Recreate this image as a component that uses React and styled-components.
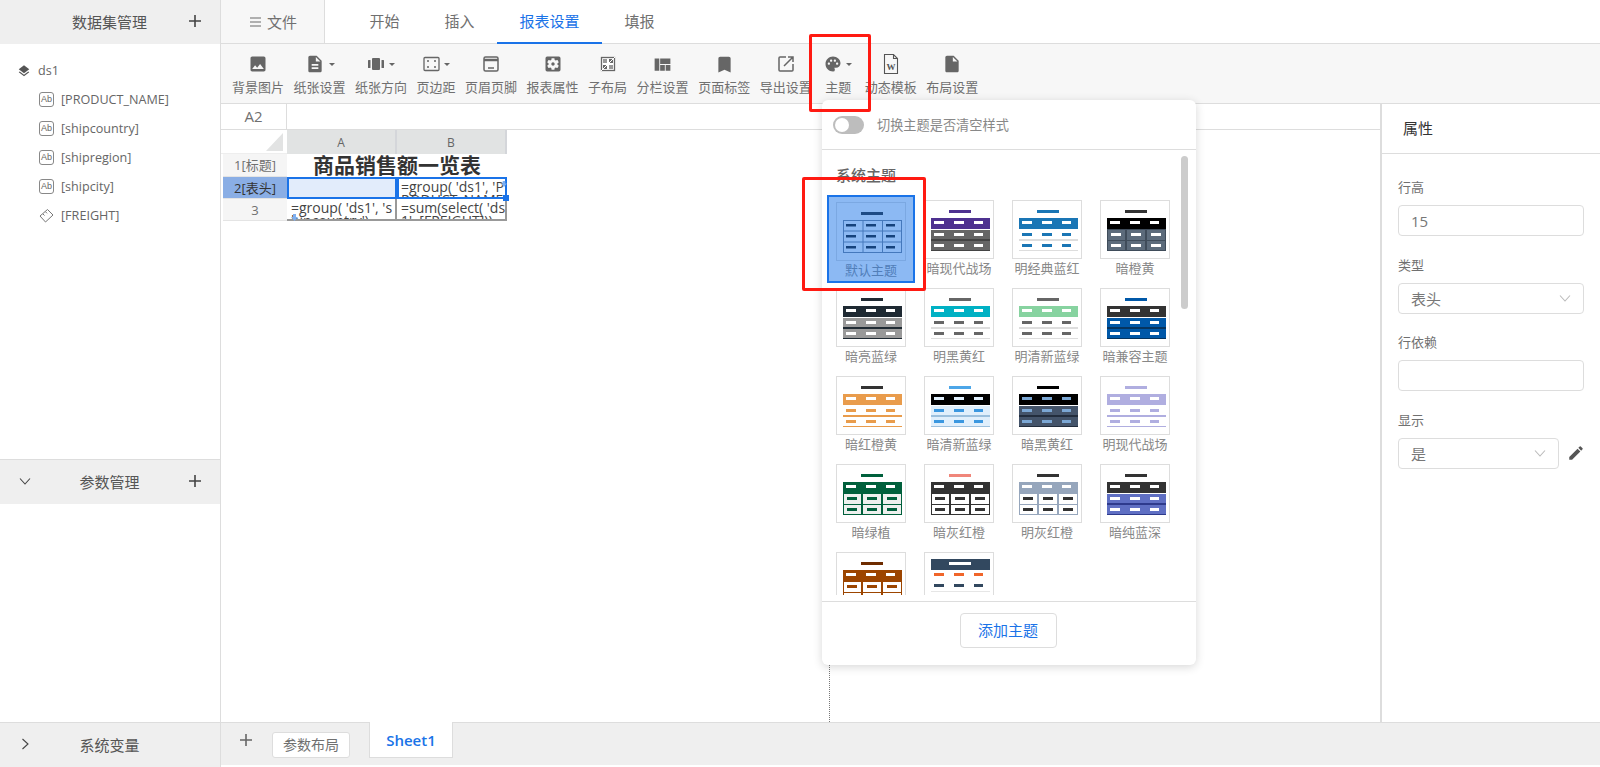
import React from "react";
import styled, { createGlobalStyle } from "styled-components";
import { MdPhoto, MdDescription, MdSettingsApplications, MdViewQuilt, MdBookmark, MdPalette, MdInsertDriveFile, MdEdit, MdLayers } from "react-icons/md";

const FONT = `"Open Sans", "Noto Sans CJK SC", sans-serif`;

const Global = createGlobalStyle`
  html, body { margin: 0; padding: 0; height: 100%; background: #fff; overflow: hidden; }
  * { box-sizing: border-box; }
  body { font-family: ${FONT}; color: #666; }
`;

const Page = styled.div`
  position: relative;
  width: 1600px;
  height: 767px;
  display: grid;
  grid-template-columns: 221px 1fr;
  overflow: hidden;
`;

/* ---------- Sidebar ---------- */
const Sidebar = styled.aside`
  display: flex;
  flex-direction: column;
  border-right: 1px solid #ddd;
  height: 767px;
`;
const PanelBar = styled.div`
  height: ${p => p.$h || 45}px;
  flex: none;
  background: #efefef;
  border-top: ${p => (p.$noBorder ? "none" : "1px solid #ddd")};
  display: grid;
  grid-template-columns: 49px 1fr 50px;
  align-items: center;
  padding-bottom: 2px;
  font-size: 15px;
  color: #555;
  text-align: center;
`;
const BarIcon = styled.span`
  display: flex;
  justify-content: center;
  color: #444;
`;
const Tree = styled.div`
  height: 415px;
  flex: none;
  padding-top: 12px;
`;
const Spacer = styled.div`
  flex: 1;
`;
const TreeRow = styled.div`
  height: 29px;
  display: flex;
  align-items: center;
  gap: 7px;
  padding-left: ${p => (p.$root ? 17 : 39)}px;
  font-size: 12.6px;
  color: #666;
  svg { flex: none; }
`;
const AbIcon = styled.span`
  width: 15px;
  height: 15px;
  border: 1px solid #888;
  border-radius: 3px;
  font-size: 9px;
  line-height: 13px;
  text-align: center;
  color: #666;
  font-family: "Liberation Sans", sans-serif;
  flex: none;
`;

/* ---------- Main ---------- */
const Main = styled.main`
  display: flex;
  flex-direction: column;
  height: 767px;
  min-width: 0;
`;
const TopBar = styled.div`
  height: 44px;
  flex: none;
  display: flex;
  border-bottom: 1px solid #ddd;
`;
const FileTab = styled.div`
  width: 104px;
  height: 43px;
  display: flex;
  align-items: center;
  gap: 6px;
  padding-left: 29px;
  background: #f7f7f7;
  border-right: 1px solid #ddd;
  font-size: 15px;
  color: #707070;
`;
const Tabs = styled.div`
  display: flex;
  padding-left: 22px;
`;
const Tab = styled.div`
  height: 44px;
  padding: 0 22.5px;
  line-height: 43px;
  font-size: 15px;
  color: ${p => (p.$active ? "#1a73e8" : "#707070")};
  border-bottom: 2px solid ${p => (p.$active ? "#1a73e8" : "transparent")};
`;
const Toolbar = styled.div`
  height: 60px;
  flex: none;
  display: flex;
  gap: 9.5px;
  padding: 8px 0 0 11px;
  background: #f7f7f7;
  border-bottom: 1px solid #ddd;
`;
const Tool = styled.div`
  min-width: 34px;
  display: flex;
  flex-direction: column;
  align-items: center;
  font-size: 13px;
  line-height: 20px;
  color: #707070;
  white-space: nowrap;
`;
const ToolIcon = styled.div`
  height: 24px;
  margin-bottom: 1px;
  display: flex;
  align-items: center;
  gap: 4px;
  color: #666;
`;
const Caret = styled.i`
  width: 0;
  height: 0;
  border-left: 3px solid transparent;
  border-right: 3px solid transparent;
  border-top: 3px solid #666;
`;
const Body = styled.div`
  flex: 1;
  display: flex;
  min-height: 0;
`;
const Work = styled.div`
  flex: 1;
  min-width: 0;
  position: relative;
`;
const FormulaBar = styled.div`
  height: 26px;
  border-bottom: 1px solid #ddd;
  display: flex;
`;
const CellName = styled.div`
  width: 66px;
  border-right: 1px solid #ddd;
  text-align: center;
  font-size: 15px;
  line-height: 25px;
  color: #707070;
`;
const Sheet = styled.div`
  display: grid;
  grid-template-columns: 66px 110px 110px;
  grid-template-rows: 24px 23px 22px 22px;
  width: 287px;
`;
const Corner = styled.div`
  display: flex;
  justify-content: flex-end;
  align-items: flex-end;
  padding: 2px 4px;
  background: #fff;
  border-bottom: 1px solid #eee;
  &::after {
    content: "";
    width: 17px;
    height: 18px;
    background: #e2e3e3;
    clip-path: polygon(100% 0, 100% 100%, 0 100%);
  }
`;
const ColHead = styled.div`
  background: #e1e3e3;
  border-right: 2px solid #d4d6da;
  text-align: center;
  font-size: 12px;
  line-height: 25px;
  color: #666;
`;
const RowHead = styled.div`
  margin-left: 2px;
  background: ${p => (p.$active ? "#8aaee5" : "#f5f5f5")};
  border-bottom: 1px solid #e4e4e4;
  text-align: center;
  font-size: 13px;
  line-height: 22px;
  color: ${p => (p.$active ? "#333" : "#707070")};
`;
const TitleCell = styled.div`
  grid-column: span 2;
  text-align: center;
  font-size: 21px;
  font-weight: 700;
  line-height: 22px;
  color: #333;
  overflow: hidden;
`;
const Cell = styled.div`
  overflow: hidden;
  border-style: solid;
  border-color: ${p => (p.$sel ? "#1a73e8" : "#999")};
  border-width: ${p => (p.$sel ? "2px" : "0 2px 2px 0")};
  background: ${p => (p.$fill ? "#e2ecfb" : "#fff")};
  padding: ${p => (p.$sel ? "1px 0 0 2px" : "2px 0 0 4px")};
  font-size: 14px;
  line-height: 13px;
  color: #444;
  white-space: pre;
`;
const Handle = styled.span`
  position: absolute;
  left: 282px;
  top: 91px;
  width: 6px;
  height: 6px;
  background: #1a73e8;
`;
const FillMark = styled.svg`
  position: absolute;
  left: ${p => p.$x}px;
  top: ${p => p.$y}px;
`;
const PageLine = styled.div`
  position: absolute;
  left: 608px;
  top: 26px;
  bottom: 0;
  border-left: 1px dotted #777;
`;

/* ---------- Right panel ---------- */
const RightPanel = styled.aside`
  width: 220px;
  flex: none;
  border-left: 2px solid #ddd;
`;
const RightHead = styled.div`
  height: 50px;
  border-bottom: 1px solid #ddd;
  padding-left: 21px;
  line-height: 49px;
  font-size: 15px;
  color: #333;
`;
const Form = styled.div`
  padding: 24px 0 0 16px;
`;
const Field = styled.div`
  margin-bottom: 19.67px;
`;
const Label = styled.div`
  font-size: 13px;
  line-height: 18px;
  color: #707070;
  margin-bottom: 9px;
`;
const FieldRow = styled.div`
  display: flex;
  align-items: center;
  gap: 8px;
  color: #555;
`;
const Input = styled.div`
  width: ${p => p.$w || 186}px;
  height: 31px;
  border: 1px solid #ddd;
  border-radius: 4px;
  padding: 0 12px;
  display: flex;
  align-items: center;
  justify-content: space-between;
  font-size: 15px;
  color: #777;
  background: #fff;
`;

/* ---------- Footer ---------- */
const Footer = styled.div`
  height: 43px;
  flex: none;
  margin-bottom: 2px;
  background: #efefef;
  border-top: 1px solid #ddd;
  display: flex;
  align-items: flex-start;
  padding-left: 18px;
  color: #666;
`;
const FooterPlus = styled.span`
  margin-top: 10px;
  display: flex;
`;
const SheetBtn = styled.div`
  margin: 9px 0 0 19px;
  width: 78px;
  height: 26px;
  background: #fff;
  border: 1px solid #ddd;
  border-radius: 3px;
  text-align: center;
  font-size: 14px;
  line-height: 24px;
  color: #707070;
`;
const SheetTab = styled.div`
  margin: -1px 0 0 19px;
  width: 84px;
  height: 36px;
  background: #fff;
  border: 1px solid #ddd;
  border-top: none;
  text-align: center;
  font-size: 15px;
  font-weight: 600;
  line-height: 36px;
  color: #1a73e8;
`;

/* ---------- Theme popup ---------- */
const Popup = styled.div`
  position: absolute;
  left: 822px;
  top: 100px;
  width: 374px;
  height: 565px;
  background: #fff;
  border-radius: 6px;
  box-shadow: 0 2px 10px rgba(0, 0, 0, 0.16);
  display: flex;
  flex-direction: column;
`;
const SwitchRow = styled.div`
  height: 50px;
  flex: none;
  display: flex;
  align-items: center;
  gap: 13px;
  padding-left: 11px;
  border-bottom: 1px solid #ddd;
  font-size: 13.2px;
  color: #888;
`;
const Toggle = styled.span`
  width: 31px;
  height: 18px;
  border-radius: 9px;
  background: #bdbdbd;
  display: flex;
  align-items: center;
  padding-left: 2px;
  &::before {
    content: "";
    width: 14px;
    height: 14px;
    border-radius: 50%;
    background: #fff;
  }
`;
const ListArea = styled.div`
  position: relative;
  height: 445px;
  flex: none;
  overflow: hidden;
  padding: 15px 0 0 14px;
`;
const SectionTitle = styled.div`
  font-size: 15px;
  font-weight: 500;
  line-height: 20px;
  color: #666;
  margin: 0 0 15px 0;
`;
const ThemeGrid = styled.div`
  display: grid;
  grid-template-columns: repeat(4, 70px);
  column-gap: 18px;
  row-gap: 9px;
`;
const ThemeItem = styled.div`
  position: relative;
  top: ${p => (p.$selected ? 2 : 0)}px;
`;
const ThumbBox = styled.div`
  width: 70px;
  height: 59px;
  border: 1px solid #ddd;
  background: #fff;
  svg { display: block; margin: -1px; }
`;
const ThemeName = styled.div`
  height: 20px;
  font-size: 13px;
  line-height: 18px;
  text-align: center;
  color: #888;
  white-space: nowrap;
`;
const SelectedMask = styled.div`
  position: absolute;
  left: -9px;
  top: -7px;
  width: 88px;
  height: 88px;
  border: 2px solid #1a73e8;
  background: rgba(26, 115, 232, 0.5);
`;
const ScrollThumb = styled.div`
  position: absolute;
  left: 359px;
  top: 6px;
  width: 7px;
  height: 153px;
  border-radius: 4px;
  background: #ccc;
`;
const PopupFoot = styled.div`
  flex: 1;
  border-top: 1px solid #ddd;
  margin-top: 6px;
  display: flex;
  justify-content: center;
  padding: 11px 2px 0 0;
`;
const AddBtn = styled.div`
  width: 97px;
  height: 35px;
  border: 1px solid #ddd;
  border-radius: 4px;
  text-align: center;
  font-size: 15px;
  line-height: 33px;
  color: #1a73e8;
`;
const RedBox = styled.div`
  position: absolute;
  left: ${p => p.$x}px;
  top: ${p => p.$y}px;
  width: ${p => p.$w}px;
  height: ${p => p.$h}px;
  border: 3px solid #ff1a12;
  border-radius: 2px;
  pointer-events: none;
`;

/* ---------- Drawings ---------- */
const Plus = ({ size = 14, color = "#444" }) => (
  <svg width={size} height={size} viewBox="0 0 14 14"><path d="M7 1v12M1 7h12" stroke={color} strokeWidth="1.6" fill="none" /></svg>
);
const Chevron = ({ dir = "down", size = 12, color = "#444" }) => (
  <svg width={size} height={size} viewBox="0 0 12 12" fill="none" stroke={color} strokeWidth="1.1">
    <path d={dir === "down" ? "M1 3.500 6 9l5-5.500" : "M3.500 1 9 6l-5.500 5"} />
  </svg>
);
const Ruler = () => (
  <svg width="15" height="15" viewBox="0 0 15 15" fill="none" stroke="#777" strokeWidth="1">
    <path d="M1 8 8.500 1.500 14 7 6.500 14z M4 6l1.500 1.500M6.500 3.800 8 5.300" />
  </svg>
);
const Orientation = () => (
  <svg width="18" height="20" viewBox="0 0 18 20" fill="#666"><rect x="5" y="4" width="8" height="12" rx="1" /><rect x="1" y="6" width="2.500" height="8" rx="0.5" /><rect x="14.500" y="6" width="2.500" height="8" rx="0.5" /></svg>
);
const Margins = () => (
  <svg width="17" height="20" viewBox="0 0 17 20" fill="none" stroke="#666"><rect x="1" y="3.500" width="15" height="13" rx="1" strokeWidth="1.300" /><path d="M4 7h2M11 7h2M4 13h2M11 13h2" strokeWidth="1.400" /></svg>
);
const HeaderFooter = () => (
  <svg width="20" height="20" viewBox="0 0 20 20" fill="none" stroke="#666"><rect x="3" y="3" width="14" height="14" rx="1.500" strokeWidth="1.500" /><path d="M3 6h14" strokeWidth="2.500" /><path d="M7 14h6" strokeWidth="1.500" /></svg>
);
const SubLayout = () => (
  <svg width="20" height="20" viewBox="0 0 20 20"><rect x="3.500" y="3.500" width="13" height="13" fill="#fff" stroke="#666" strokeWidth="1.300" /><path d="M5 5h4v4H5zM11 11h4v4h-4z" fill="#999" /><path d="M11 5h4v4h-4zM5 11h4v4H5z" fill="#666" /><path d="M3 17 17 3" stroke="#fff" strokeWidth="1" /></svg>
);
const Export = () => (
  <svg width="20" height="20" viewBox="0 0 20 20" fill="none" stroke="#666" strokeWidth="1.500"><path d="M10 3H4a1 1 0 0 0-1 1v12a1 1 0 0 0 1 1h12a1 1 0 0 0 1-1v-6" /><path d="M8 12 16.500 3.500M12 3h5v5" /></svg>
);
const WordDoc = () => (
  <svg width="16" height="22" viewBox="0 0 16 22" fill="none" stroke="#555" strokeWidth="1.100">
    <path d="M1.500 1.500h9l4 4v15h-13z M10.500 1.500v4h4" />
    <text x="8" y="17" textAnchor="middle" fontSize="9" fontWeight="700" fontFamily="Liberation Serif, serif" fill="#555" stroke="none">W</text>
  </svg>
);

const X = [10, 30, 50];
const CELLS = [[8, 17], [27, 18], [47, 18]];
const Dash = ({ y, c, dy = 3, off = 0 }) => X.map((x, i) => <rect key={i} x={x + off} y={y} width={i === 2 && !off ? 9 : 10} height={dy} fill={c} />);

const Thumb = ({ t }) => {
  const { type, title, head, row, line, dash, headDash = "#fff" } = t;
  return (
    <ThumbBox>
      <svg width="70" height="59" viewBox="0 0 70 59">
        {type === "banner" ? (
          <>
            <rect x="7" y="7" width="59" height="11" fill={head} />
            <rect x="25" y="10" width="22" height="3" fill="#fff" />
            <Dash y={21} c="#f0652a" />
            <Dash y={32} c={head} />
            <rect x="7" y="39" width="59" height="1" fill="#e6e6e6" />
          </>
        ) : (
          <>
            <rect x="25" y="10" width="22" height="3" fill={title} />
            {type !== "plain" && <rect x="7" y="18" width="59" height="11" fill={head} />}
            {type !== "plain" && <Dash y={21} c={headDash} />}
            {type === "dark" && (
              <>
                <rect x="7" y="30" width="59" height="21" fill={line} />
                <rect x="7" y="30" width="59" height="9" fill={row} />
                <rect x="7" y="41" width="59" height="9" fill={row} />
                <Dash y={33} c={dash} />
                <Dash y={44} c={dash} />
              </>
            )}
            {type === "light" && (
              <>
                <rect x="7" y="39" width="59" height="2" fill={line} />
                <rect x="7" y="50" width="59" height="1" fill={line} />
                {row && <rect x="7" y="30" width="59" height="9" fill={row} />}
                {row && <rect x="7" y="41" width="59" height="9" fill={row} />}
                <Dash y={33} c={dash} />
                <Dash y={44} c={dash} />
              </>
            )}
            {type === "grid" && (
              <>
                <rect x="7" y="29" width="59" height="22" fill={line} />
                {[[30, 10], [41, 9]].map(([y, h]) => CELLS.map(([x, w]) => <rect key={x + "-" + y} x={x} y={y} width={w} height={h} fill={row} />))}
                <Dash y={33} c={dash} off={1} />
                <Dash y={44} c={dash} off={1} />
              </>
            )}
            {type === "plain" && (
              <>
                <rect x="7.500" y="18.500" width="58" height="32" fill="none" stroke={line} />
                <path d="M27 18v32M46.500 18v32M7 29h59M7 40h59" stroke={line} />
                <Dash y={22} c={dash} dy={2.500} />
                <Dash y={33} c={dash} dy={2.500} />
                <Dash y={44} c={dash} dy={2.500} />
              </>
            )}
          </>
        )}
      </svg>
    </ThumbBox>
  );
};

const themes = [
  { name: "默认主题", selected: true, type: "plain", title: "#222", line: "#6f7d90", dash: "#111" },
  { name: "暗现代战场", type: "dark", title: "#4e3190", head: "#4e3190", row: "#666", line: "#444", dash: "#fff" },
  { name: "明经典蓝红", type: "light", title: "#1a76b5", head: "#1a76b5", line: "#ddd", dash: "#1a76b5" },
  { name: "暗橙黄", type: "grid", title: "#333", head: "#000", row: "#5c6b7b", line: "#3f4c5a", dash: "#fff" },
  { name: "暗亮蓝绿", type: "dark", title: "#1f2a33", head: "#1f2a33", row: "#999", line: "#1f2a33", dash: "#fff" },
  { name: "明黑黄红", type: "light", title: "#666", head: "#00b1c4", line: "#ddd", dash: "#666" },
  { name: "明清新蓝绿", type: "light", title: "#666", head: "#87d3a0", line: "#ddd", dash: "#666" },
  { name: "暗兼容主题", type: "dark", title: "#0058a8", head: "#333", row: "#0058a8", line: "#06345e", dash: "#fff" },
  { name: "暗红橙黄", type: "light", title: "#333", head: "#e99c4c", line: "#e99c4c", dash: "#e99c4c" },
  { name: "暗清新蓝绿", type: "light", title: "#4da6e8", head: "#000", row: "#e0effc", line: "#9cc0dd", dash: "#3a97e0", headDash: "#e0effc" },
  { name: "暗黑黄红", type: "dark", title: "#000", head: "#000", row: "#44546a", line: "#222d3d", dash: "#7ba7d4", headDash: "#7ba7d4" },
  { name: "明现代战场", type: "light", title: "#b0aee0", head: "#b0aee0", line: "#b0aee0", dash: "#b0aee0" },
  { name: "暗绿植", type: "grid", title: "#00603c", head: "#00603c", row: "#eef0ee", line: "#00603c", dash: "#00603c" },
  { name: "暗灰红橙", type: "grid", title: "#f0867a", head: "#333", row: "#fff", line: "#333", dash: "#333" },
  { name: "明灰红橙", type: "grid", title: "#333", head: "#96a6bc", row: "#fff", line: "#96a6bc", dash: "#333" },
  { name: "暗纯蓝深", type: "dark", title: "#333", head: "#333", row: "#5f6fc3", line: "#2e3a8c", dash: "#fff" },
  { name: "", type: "grid", title: "#6e2c00", head: "#9c4500", row: "#fff", line: "#9c4500", dash: "#9c4500" },
  { name: "", type: "banner", head: "#32485f" },
];

const tools = [
  { label: "背景图片", icon: <MdPhoto size={20} /> },
  { label: "纸张设置", icon: <MdDescription size={20} />, caret: true },
  { label: "纸张方向", icon: <Orientation />, caret: true },
  { label: "页边距", icon: <Margins />, caret: true },
  { label: "页眉页脚", icon: <HeaderFooter /> },
  { label: "报表属性", icon: <MdSettingsApplications size={20} /> },
  { label: "子布局", icon: <SubLayout /> },
  { label: "分栏设置", icon: <MdViewQuilt size={21} /> },
  { label: "页面标签", icon: <MdBookmark size={21} /> },
  { label: "导出设置", icon: <Export /> },
  { label: "主题", icon: <MdPalette size={18} />, caret: true },
  { label: "动态模板", icon: <WordDoc /> },
  { label: "布局设置", icon: <MdInsertDriveFile size={20} /> },
];

const fields = [
  { icon: <AbIcon>Ab</AbIcon>, text: "[PRODUCT_NAME]" },
  { icon: <AbIcon>Ab</AbIcon>, text: "[shipcountry]" },
  { icon: <AbIcon>Ab</AbIcon>, text: "[shipregion]" },
  { icon: <AbIcon>Ab</AbIcon>, text: "[shipcity]" },
  { icon: <Ruler />, text: "[FREIGHT]" },
];

export default function App() {
  return (
    <Page>
      <Global />
      <Sidebar>
        <PanelBar $h={44} $noBorder>
          <span />
          <span>数据集管理</span>
          <BarIcon><Plus /></BarIcon>
        </PanelBar>
        <Tree>
          <TreeRow $root><MdLayers size={14} color="#555" /><span>ds1</span></TreeRow>
          {fields.map(f => (
            <TreeRow key={f.text}>{f.icon}<span>{f.text}</span></TreeRow>
          ))}
        </Tree>
        <PanelBar>
          <BarIcon><Chevron /></BarIcon>
          <span>参数管理</span>
          <BarIcon><Plus /></BarIcon>
        </PanelBar>
        <Spacer />
        <PanelBar>
          <BarIcon><Chevron dir="right" /></BarIcon>
          <span>系统变量</span>
          <span />
        </PanelBar>
      </Sidebar>

      <Main>
        <TopBar>
          <FileTab>
            <svg width="11" height="10" viewBox="0 0 11 10"><path d="M0 1h11M0 5h11M0 9h11" stroke="#999" strokeWidth="1.300" /></svg>
            <span>文件</span>
          </FileTab>
          <Tabs>
            <Tab>开始</Tab>
            <Tab>插入</Tab>
            <Tab $active>报表设置</Tab>
            <Tab>填报</Tab>
          </Tabs>
        </TopBar>
        <Toolbar>
          {tools.map(t => (
            <Tool key={t.label}>
              <ToolIcon>{t.icon}{t.caret && <Caret />}</ToolIcon>
              <span>{t.label}</span>
            </Tool>
          ))}
        </Toolbar>
        <Body>
          <Work>
            <FormulaBar><CellName>A2</CellName></FormulaBar>
            <Sheet>
              <Corner />
              <ColHead>A</ColHead>
              <ColHead>B</ColHead>
              <RowHead>1[标题]</RowHead>
              <TitleCell>商品销售额一览表</TitleCell>
              <RowHead $active>2[表头]</RowHead>
              <Cell $sel $fill />
              <Cell $sel>{"=group( 'ds1', 'P\nRODUCT_NAME')"}</Cell>
              <RowHead>3</RowHead>
              <Cell>{"=group( 'ds1', 's\nhipcountry')"}</Cell>
              <Cell>{"=sum(select( 'ds\n1', [FREIGHT]))"}</Cell>
            </Sheet>
            <Handle />
            <FillMark $x={70} $y={110} width="7" height="7" viewBox="0 0 7 7"><path d="M3.500 7 0 3h2V0h3v3h2z" fill="#7fb0f0" /></FillMark>
            <FillMark $x={280} $y={77} width="6" height="6" viewBox="0 0 7 7"><path d="M3.500 7 0 3h2V0h3v3h2z" fill="#7fb0f0" /></FillMark>
            <PageLine />
          </Work>
          <RightPanel>
            <RightHead>属性</RightHead>
            <Form>
              <Field><Label>行高</Label><Input>15</Input></Field>
              <Field><Label>类型</Label><Input>表头<Chevron color="#bbb" /></Input></Field>
              <Field><Label>行依赖</Label><Input /></Field>
              <Field>
                <Label>显示</Label>
                <FieldRow>
                  <Input $w={161}>是<Chevron color="#bbb" /></Input>
                  <MdEdit size={18} />
                </FieldRow>
              </Field>
            </Form>
          </RightPanel>
        </Body>
        <Footer>
          <FooterPlus><Plus color="#666" /></FooterPlus>
          <SheetBtn>参数布局</SheetBtn>
          <SheetTab>Sheet1</SheetTab>
        </Footer>
      </Main>

      <Popup>
        <SwitchRow><Toggle /><span>切换主题是否清空样式</span></SwitchRow>
        <ListArea>
          <SectionTitle>系统主题</SectionTitle>
          <ThemeGrid>
            {themes.map((t, i) => (
              <ThemeItem key={i} $selected={t.selected}>
                <Thumb t={t} />
                <ThemeName>{t.name}</ThemeName>
                {t.selected && <SelectedMask />}
              </ThemeItem>
            ))}
          </ThemeGrid>
          <ScrollThumb />
        </ListArea>
        <PopupFoot><AddBtn>添加主题</AddBtn></PopupFoot>
      </Popup>

      <RedBox $x={809} $y={34} $w={62} $h={78} />
      <RedBox $x={802} $y={177} $w={124} $h={114} />
    </Page>
  );
}
